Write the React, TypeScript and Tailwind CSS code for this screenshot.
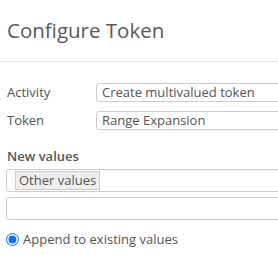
export default function App() {
  return (
    <div
      className="w-[278px] h-[255px] overflow-hidden bg-white text-[13px] text-[#555]"
      style={{ fontFamily: '"Open Sans", sans-serif' }}
    >
      {/* header */}
      <div className="h-[62px] border-b border-[#e5e5e5] pl-[7px] pt-[16px]">
        <h1 className="text-[20.5px] leading-[28px] text-[#5a5a5a] whitespace-nowrap">Configure Token</h1>
      </div>

      <div className="pl-[6px] pt-[21px]">
        <div className="flex items-center h-[19px]">
          <label className="w-[90px] shrink-0 pl-[1px]">Activity</label>
          <div className="w-[200px] h-[19px] shrink-0 border border-[#ccc] rounded-[3px] px-[5px] leading-[17px] whitespace-nowrap">
            Create multivalued token
          </div>
        </div>
        <div className="flex items-center h-[19px] mt-[9px]">
          <label className="w-[90px] shrink-0 pl-[1px]">Token</label>
          <div className="w-[200px] h-[19px] shrink-0 border border-[#ccc] rounded-[3px] px-[5px] leading-[17px] whitespace-nowrap">
            Range Expansion
          </div>
        </div>

        <div className="mt-[17px] pl-[1px] font-semibold leading-[18px]">New values</div>

        <div className="mt-[4px] w-[290px] h-[23px] border border-[#ccc] rounded-[3px] flex items-center pl-[8px]">
          <span className="h-[19px] leading-[17px] px-[3px] bg-[#eee] border border-[#ccc] whitespace-nowrap">
            Other values
          </span>
        </div>
        <div className="mt-[5px] w-[290px] h-[23px] border border-[#ccc] rounded-[3px]" />

        <label className="mt-[10px] flex items-center whitespace-nowrap">
          <input type="radio" defaultChecked className="m-0 w-[13px] h-[13px] accent-[#0075ff]" />
          <span className="ml-[4px]">Append to existing values</span>
        </label>
      </div>
    </div>
  );
}
